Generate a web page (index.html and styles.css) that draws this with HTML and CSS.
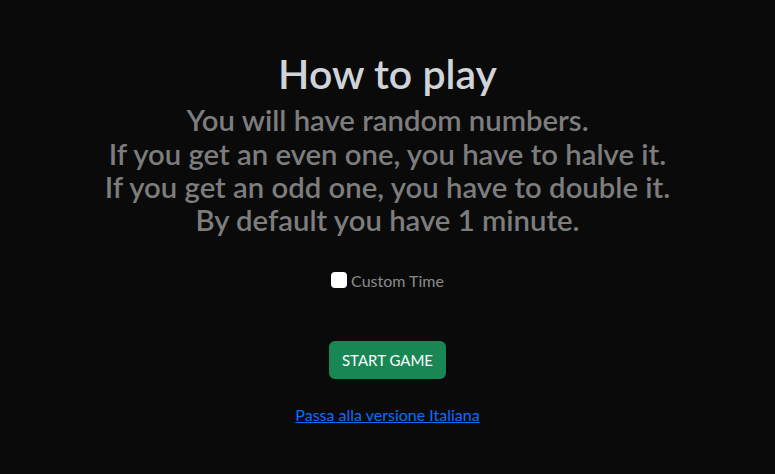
FILE: index.html
```
<!DOCTYPE html>
<html lang="en">
<head>
  <meta charset="UTF-8" />
  <title>Halve or Double</title>
  <meta name="viewport" content="width=device-width, initial-scale=1.0"/>
  <link rel="stylesheet" href="styles.css">
</head>
<body>

  <div class="container">

    <!-- Rules -->
    <h1 class="title">How to play</h1>
    <h3 class="rules">
      You will have random numbers.<br>
      If you get an even one, you have to halve it.<br>
      If you get an odd one, you have to double it.<br>
      By default you have 1 minute.
    </h3>

    <!-- Options -->
    <label class="custom-time">
      <input type="checkbox" id="customTime" />
      <span>Custom Time</span>
    </label>

    <button class="start-btn">START GAME</button>

    <a href="#" class="lang-link">Passa alla versione Italiana</a>

  </div>

</body>
</html>
```

FILE: styles.css
```
* { box-sizing: border-box; }
body {
  margin: 0;
  background: #0a0a0a;
  font-family: 'Lato', 'Open Sans', sans-serif;
}
.container {
  display: flex;
  flex-direction: column;
  align-items: center;
  text-align: center;
  padding-top: 49px;
}

.title {
  margin: 0;
  font-size: 41px;
  font-weight: 600;
  line-height: 1.2;
  color: #d0d4d9;
}
.rules {
  margin: 5px 0 0;
  font-size: 29.3px;
  font-weight: 600;
  line-height: 33.4px;
  color: #7d7d7d;
}

/* Options */
.custom-time {
  display: flex;
  align-items: center;
  gap: 4px;
  margin-top: 34px;
  font-size: 16px;
  color: #8a8a8a;
}
.custom-time input {
  appearance: none;
  width: 16px;
  height: 16px;
  margin: 0;
  background: white;
  border-radius: 4px;
}

.start-btn {
  margin-top: 51px;
  background: #198754;
  color: white;
  border: none;
  border-radius: 6px;
  padding: 8px 13px;
  font-family: inherit;
  font-size: 15px;
  line-height: 22px;
}

.lang-link {
  margin-top: 26px;
  color: #0d6efd;
  font-size: 16px;
}
```
